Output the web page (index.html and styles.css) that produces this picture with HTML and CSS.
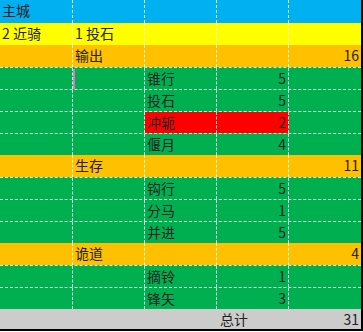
FILE: index.html
```html
<!DOCTYPE html>
<html lang="zh">
<head>
<meta charset="utf-8">
<link rel="stylesheet" href="styles.css">
</head>
<body>
<div class="sheet">
  <div class="row blue first"><div class="c">主城</div><div class="c"></div><div class="c"></div><div class="c"></div><div class="c end"></div></div>
  <div class="row yellow"><div class="c">2 近骑</div><div class="c">1 投石</div><div class="c"></div><div class="c"></div><div class="c end"></div></div>
  <div class="row orange"><div class="c"></div><div class="c">输出</div><div class="c"></div><div class="c"></div><div class="c end num">16</div></div>
  <div class="row green"><div class="c"></div><div class="c mark"></div><div class="c">锥行</div><div class="c num">5</div><div class="c end"></div></div>
  <div class="row green"><div class="c"></div><div class="c"></div><div class="c">投石</div><div class="c num">5</div><div class="c end"></div></div>
  <div class="row green"><div class="c"></div><div class="c"></div><div class="c red">冲轭</div><div class="c red num">2</div><div class="c end"></div></div>
  <div class="row green"><div class="c"></div><div class="c"></div><div class="c">偃月</div><div class="c num">4</div><div class="c end"></div></div>
  <div class="row orange"><div class="c"></div><div class="c">生存</div><div class="c"></div><div class="c"></div><div class="c end num">11</div></div>
  <div class="row green"><div class="c"></div><div class="c"></div><div class="c">钩行</div><div class="c num">5</div><div class="c end"></div></div>
  <div class="row green"><div class="c"></div><div class="c"></div><div class="c">分马</div><div class="c num">1</div><div class="c end"></div></div>
  <div class="row green"><div class="c"></div><div class="c"></div><div class="c">并进</div><div class="c num">5</div><div class="c end"></div></div>
  <div class="row orange"><div class="c"></div><div class="c">诡道</div><div class="c"></div><div class="c"></div><div class="c end num">4</div></div>
  <div class="row green"><div class="c"></div><div class="c"></div><div class="c">摘铃</div><div class="c num">1</div><div class="c end"></div></div>
  <div class="row green"><div class="c"></div><div class="c"></div><div class="c">锋矢</div><div class="c num">3</div><div class="c end"></div></div>
  <div class="row grey total"><div class="c"></div><div class="c"></div><div class="c"></div><div class="c">总计</div><div class="c end num">31</div></div>
</div>
</body>
</html>
```
FILE: styles.css
```css
html, body {
  margin: 0;
  padding: 0;
  background: #ffffff;
}
.sheet {
  width: 361px;
  border-right: 2px solid #000;
  border-bottom: 2px solid #000;
  font-family: "Noto Sans CJK SC", "Microsoft YaHei", sans-serif;
  font-size: 14px;
  color: #222;
}
.row {
  display: grid;
  grid-template-columns: 73px 72px 72px 72px 72px;
  height: 22px;
  box-sizing: border-box;
}
.row.first { height: 23px; }
.blue { background: #00b0f0; }
.yellow { background: #ffff00; }
.orange { background: #ffc000; }
.green { background: #00b050; border-top: 1px dashed rgba(255,255,255,0.8); }
.grey { background: #cccccc; height: 20px; }
.c {
  box-sizing: border-box;
  padding: 0 2px;
  line-height: 21px;
  white-space: nowrap;
  overflow: hidden;
  border-right: 1px dashed rgba(255,255,255,0.8);
  position: relative;
}
.c.end { border-right: none; }
.total .c { border-right: none; line-height: 20px; }
.total .c:nth-child(4) { padding-left: 3px; }
.num { text-align: right; }
.red { background: #ff0000; }
.mark::before {
  content: "";
  position: absolute;
  left: 0;
  top: 1px;
  width: 2px;
  height: 20px;
  background: #e07ac8;
}
```
